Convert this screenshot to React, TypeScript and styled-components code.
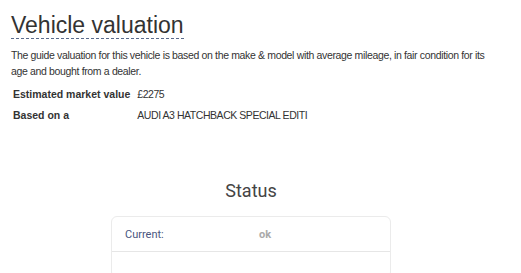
import styled, { createGlobalStyle } from 'styled-components'

const Global = createGlobalStyle`
  body {
    margin: 0;
    background: #fff;
    font-family: "Liberation Sans", Arial, sans-serif;
    color: #333;
  }
`

const Page = styled.div`
  width: 480px;
  padding: 12px 0 0 11px;
`

const Title = styled.h2`
  display: inline-block;
  margin: 0;
  font-size: 23px;
  font-weight: normal;
  line-height: 26px;
  color: #333;
  border-bottom: 1px dashed #5a6b8c;
`

const Intro = styled.p`
  margin: 8px 0 0;
  width: 484px;
  font-size: 10.5px;
  letter-spacing: -0.35px;
  line-height: 16px;
  color: #333;
`

const Details = styled.table`
  margin: 5px 0 0 2px;
  border-collapse: collapse;
  font-size: 10.5px;
  color: #333;

  th {
    text-align: left;
    font-weight: bold;
    padding: 2px 0;
    line-height: 17px;
    white-space: nowrap;
  }

  td {
    padding: 2px 0 2px 7px;
    line-height: 17px;
    letter-spacing: -0.45px;
  }
`

const StatusSection = styled.section`
  margin-top: 54px;
  display: flex;
  flex-direction: column;
  align-items: center;
`

const StatusTitle = styled.h3`
  margin: 0;
  font-family: Roboto, "Liberation Sans", sans-serif;
  font-size: 18px;
  font-weight: normal;
  line-height: 22px;
  color: #444;
`

const Card = styled.div`
  margin-top: 14px;
  width: 278px;
  border: 1px solid #ebebeb;
  border-radius: 6px;
  height: 60px;
`

const CardRow = styled.div`
  display: grid;
  grid-template-columns: 134px 1fr;
  padding: 0 13px;
  height: 34px;
  align-items: center;
  border-bottom: 1px solid #e6e6e6;
  font-family: Roboto, "Liberation Sans", sans-serif;
  font-size: 11px;
`

const Label = styled.span`
  color: #4a5580;
`

const Value = styled.span`
  color: #aaa;
  font-weight: bold;
`

export default function App () {
  return (
    <Page>
      <Global />
      <Title>Vehicle valuation</Title>
      <Intro>
        The guide valuation for this vehicle is based on the make &amp; model with average mileage, in fair condition for its
        age and bought from a dealer.
      </Intro>
      <Details>
        <tbody>
          <tr>
            <th>Estimated market value</th>
            <td>£2275</td>
          </tr>
          <tr>
            <th>Based on a</th>
            <td>AUDI A3 HATCHBACK SPECIAL EDITI</td>
          </tr>
        </tbody>
      </Details>
      <StatusSection>
        <StatusTitle>Status</StatusTitle>
        <Card>
          <CardRow>
            <Label>Current:</Label>
            <Value>ok</Value>
          </CardRow>
        </Card>
      </StatusSection>
    </Page>
  )
}
